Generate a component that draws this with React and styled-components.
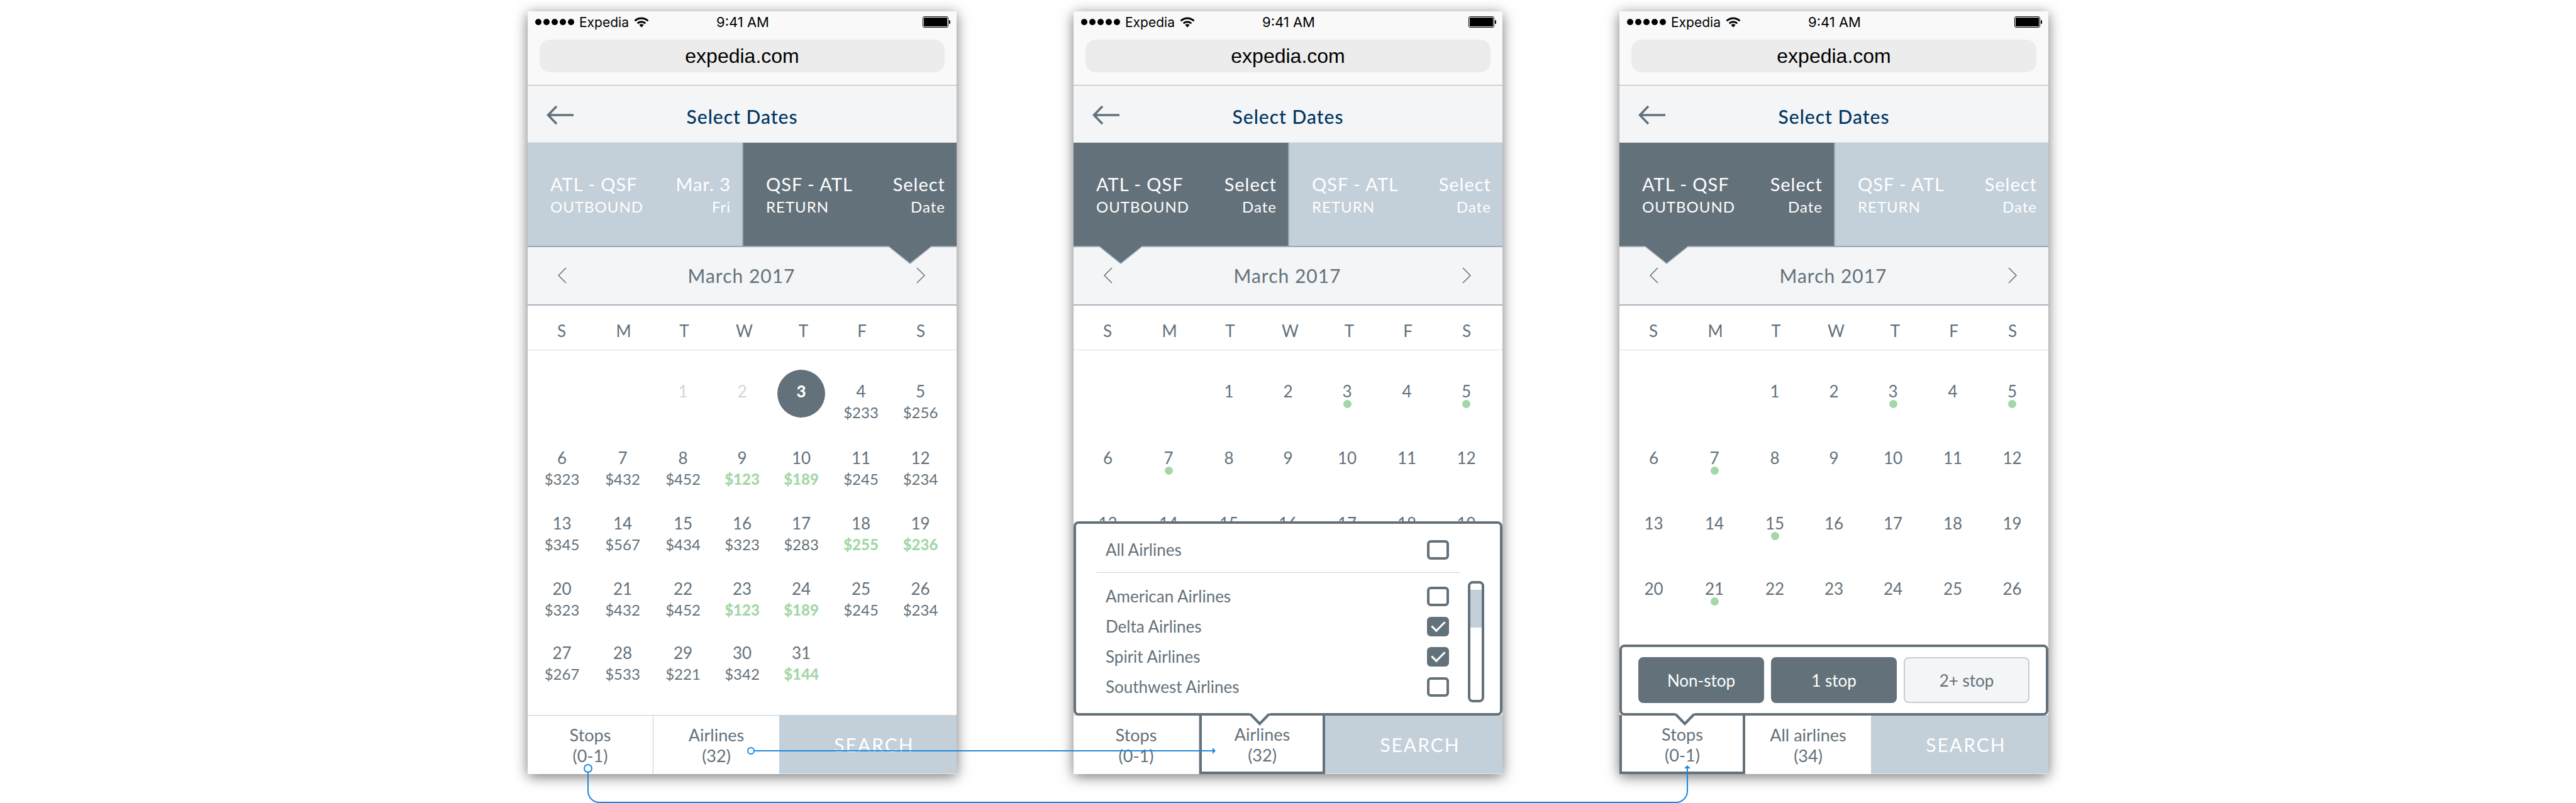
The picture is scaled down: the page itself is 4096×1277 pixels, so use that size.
import React from "react";
import styled, { createGlobalStyle, css } from "styled-components";

const c = {
  slate: "#63717a",
  mist: "#c3cfd9",
  edge: "#9ba9b4",
  panel: "#f3f5f7",
  line: "#dddddd",
  navy: "#00355f",
  green: "#a3d7a7",
  link: "#1b87de",
};

const GlobalStyle = createGlobalStyle`
  * { box-sizing: border-box; }
  body { margin: 0; background: #fff; color: ${c.slate}; font-family: Lato, "Open Sans", sans-serif; }
  button, input { font: inherit; color: inherit; }
  button { margin: 0; padding: 0; border: 0; background: none; cursor: pointer; }
`;

const Board = styled.main`
  position: relative;
  display: grid;
  grid-template-columns: repeat(3, minmax(0, 682px));
  justify-content: center;
  gap: 186px;
  min-height: 100vh;
  padding: 18px 0 46px;
  overflow: hidden;
`;

const Phone = styled.section`
  display: flex;
  flex-direction: column;
  background: #fff;
  box-shadow: 0 4px 20px rgba(0, 0, 0, 0.55);
`;

/* Browser chrome */
const Chrome = styled.div`
  padding-bottom: 20px;
  background: #f9f9f9;
  border-bottom: 1px solid #b0b0b0;
  color: #000;
  font-family: Inter, "Liberation Sans", sans-serif;
`;

const StatusBar = styled.div`
  display: grid;
  grid-template-columns: 1fr auto 1fr;
  align-items: center;
  height: 34px;
  margin-bottom: 11px;
  padding: 0 10px 0 12px;
  font-size: 21px;
`;

const Carrier = styled.div`
  display: flex;
  align-items: center;
  gap: 8px;
`;

const Clock = styled.span`
  font-size: 22px;
`;

const Signal = styled.span`
  display: flex;
  gap: 3px;
`;

const SignalDot = styled.i`
  width: 10px;
  height: 10px;
  border-radius: 50%;
  background: #000;
`;

const BatteryIcon = styled.svg`
  justify-self: end;
`;

const Address = styled.input`
  display: block;
  width: calc(100% - 38px);
  height: 52px;
  margin: 0 19px;
  padding: 0;
  border: 0;
  border-radius: 16px;
  background: #ececec;
  font-family: "Liberation Sans", sans-serif;
  font-size: 32px;
  text-align: center;
`;

/* Page header */
const Header = styled.header`
  display: grid;
  grid-template-columns: 43px 1fr 43px;
  align-items: center;
  height: 91px;
  padding: 4px 30px 0;
  background: ${c.panel};
  border-bottom: 1px solid #dfe6ea;
`;

const Title = styled.h1`
  margin: 0;
  padding-top: 3px;
  color: ${c.navy};
  font-size: 30px;
  font-weight: 500;
  letter-spacing: 1px;
  line-height: 36px;
  text-align: center;
`;

const IconButton = styled.button`
  display: grid;
  place-items: center;
`;

/* Flight legs */
const Legs = styled.div`
  position: relative;
  display: grid;
  grid-template-columns: 1fr 1fr;
  height: 166px;
  border-bottom: 2px solid ${c.edge};
`;

const Leg = styled.button`
  display: grid;
  grid-template-columns: auto auto;
  justify-content: space-between;
  align-content: center;
  padding: 3px 18px 0 36px;
  background: ${(p) => (p.$active ? c.slate : c.mist)};
  color: #fff;
  text-align: left;
  & + & { border-left: 2px solid ${c.edge}; }
`;

const LegMain = styled.span`
  font-size: 29px;
  letter-spacing: 1px;
  line-height: 36px;
  text-align: ${(p) => (p.$end ? "right" : "left")};
`;

const LegSub = styled.span`
  font-size: 24px;
  letter-spacing: 1px;
  line-height: 36px;
  text-align: ${(p) => (p.$end ? "right" : "left")};
`;

const LegPointer = styled.svg`
  position: absolute;
  top: 100%;
  ${(p) => (p.$side === "right" ? "right: 38px;" : "left: 39px;")}
`;

/* Calendar */
const MonthBar = styled.div`
  display: flex;
  align-items: center;
  justify-content: space-between;
  height: 93px;
  padding: 0 50px 2px 48px;
  background: ${c.panel};
  border-bottom: 2px solid #a9b4bd;
`;

const Month = styled.h2`
  margin: 0;
  font-size: 30px;
  font-weight: 400;
  letter-spacing: 1px;
  line-height: 36px;
`;

const Calendar = styled.table`
  display: block;
  flex: 1;
`;

const Weekdays = styled.thead`
  display: block;
  border-bottom: 1px solid ${c.line};
  & tr {
    display: grid;
    grid-template-columns: 100fr 97fr 96fr 95fr 93fr 93fr 94fr;
    padding: 0 10px 0 4px;
  }
`;

const Weekday = styled.th`
  padding: 10px 0 0;
  font-size: 26px;
  font-weight: 400;
  line-height: 60px;
`;

const Days = styled.tbody`
  display: grid;
  grid-template-rows: 106px 104px 104px 102px;
  padding-top: 31px;
`;

const Week = styled.tr`
  display: grid;
  grid-template-columns: 97fr 96fr 96fr 92fr 96fr 94fr 95fr;
  padding: 0 10px 0 6px;
`;

const DayCell = styled.td`
  display: grid;
  justify-content: center;
  align-content: start;
  padding: 0;
`;

const Day = styled.button`
  display: flex;
  flex-direction: column;
  align-items: center;
  width: 76px;
  height: 76px;
  padding-top: 17px;
  border-radius: 50%;
  font-size: 26px;
  line-height: 34px;
  ${(p) => p.$past && css`color: #d0d6da;`}
  ${(p) => p.$chosen && css`background: ${c.slate}; color: #fff; font-weight: 900;`}
`;

const Price = styled.span`
  font-size: 24px;
  ${(p) => p.$deal && css`color: ${c.green}; font-weight: 900;`}
`;

const Dot = styled.i`
  width: 13px;
  height: 13px;
  margin-top: -3px;
  border-radius: 50%;
  background: ${c.green};
`;

/* Bottom bar */
const Footer = styled.footer`
  position: relative;
  display: grid;
  grid-template-columns: 200fr 200fr 282fr;
  height: 94px;
`;

const Filter = styled.button`
  padding: 1px 0 0;
  border: solid ${c.mist};
  border-width: 1px 1px 0 0;
  background: #fff;
  font-size: 27px;
  line-height: 33px;
  & + & { border-right: 0; }
  ${(p) => p.$open && css`
    && {
      border: solid ${c.slate};
      border-width: 0 4px 4px;
      padding-top: 4px;
    }
  `}
`;

const FilterLine = styled.span`
  display: block;
`;

const Search = styled.button`
  padding-left: 20px;
  border-bottom: 1px solid #e3e9ee;
  background: ${c.mist};
  color: #fff;
  font-size: 30px;
  letter-spacing: 2px;
`;

/* Popovers */
const Popover = styled.div`
  position: absolute;
  right: 0;
  bottom: 93px;
  left: 0;
  border: 4px solid ${c.slate};
  border-radius: 8px;
  background: #fff;
`;

const PopoverPointer = styled.svg`
  position: absolute;
  top: 100%;
  left: ${(p) => p.$left};
`;

const AirlinePanel = styled(Popover)`
  display: grid;
  grid-template-columns: 1fr 26px;
  gap: 0 12px;
  padding: 17px 25px 17px 33px;
`;

const AirlineRow = styled.label`
  display: flex;
  align-items: center;
  justify-content: space-between;
  height: 48px;
  padding: 0 18px 0 14px;
  font-size: 26px;
`;

const AllAirlines = styled.div`
  grid-column: 1;
  padding-bottom: 12px;
  border-bottom: 1px solid #d4d4d4;
`;

const AirlineList = styled.div`
  grid-column: 1;
  padding-top: 13px;
`;

const Check = styled.input.attrs({ type: "checkbox" })`
  appearance: none;
  display: grid;
  place-items: center;
  width: 35px;
  height: 31px;
  margin: 0;
  border: 4px solid ${c.slate};
  border-radius: 6px;
  background: #fff;
  &:checked { background: ${c.slate}; }
  &:checked::after {
    content: "";
    width: 9px;
    height: 18px;
    margin-top: -5px;
    border: solid #fff;
    border-width: 0 3px 3px 0;
    transform: rotate(45deg);
  }
`;

const ScrollTrack = styled.div`
  grid-column: 2;
  height: 193px;
  margin-top: 13px;
  padding-top: 10px;
  border: 4px solid ${c.slate};
  border-radius: 8px;
`;

const ScrollThumb = styled.div`
  height: 60px;
  background: ${c.mist};
`;

const StopsPanel = styled(Popover)`
  display: grid;
  grid-template-columns: repeat(3, 1fr);
  gap: 11px;
  padding: 16px 26px;
`;

const StopOption = styled.button`
  height: 73px;
  border: 2px solid ${(p) => (p.$on ? c.slate : c.mist)};
  border-radius: 8px;
  background: ${(p) => (p.$on ? c.slate : c.panel)};
  color: ${(p) => (p.$on ? "#fff" : c.slate)};
  font-size: 26px;
`;

/* Flow arrows between the screens */
const Flow = styled.svg`
  position: absolute;
  top: 0;
  left: calc(50% - 1209px);
  pointer-events: none;
`;

const Wifi = () => (
  <svg width="24" height="17" viewBox="0 0 24 17" fill="none" stroke="#000" strokeWidth="3">
    <path d="M1.5 6.2a15 15 0 0 1 21 0" />
    <path d="M5.7 10.2a9 9 0 0 1 12.6 0" />
    <path d="M12 16.5l-3.6-3.7a5.2 5.2 0 0 1 7.2 0z" fill="#000" stroke="none" />
  </svg>
);

const Battery = () => (
  <BatteryIcon width="44" height="18" viewBox="0 0 44 18">
    <rect x="0.5" y="0.5" width="40" height="17" rx="2.5" fill="none" stroke="#000" />
    <rect x="2" y="2" width="37" height="14" rx="1" />
    <path d="M42 6h.5a1.5 1.5 0 0 1 1.5 1.5v3a1.5 1.5 0 0 1-1.5 1.5H42z" />
  </BatteryIcon>
);

const BackArrow = () => (
  <svg width="43" height="30" viewBox="0 0 43 30" fill="none" stroke={c.slate} strokeWidth="3.5">
    <path d="M2.5 15H43M16 1L2.5 15 16 29" />
  </svg>
);

const Chevron = ({ next }) => (
  <svg width="14" height="26" viewBox="0 0 14 26" fill="none" stroke={c.slate} strokeWidth="1.5">
    <path d={next ? "M1 1l12 12L1 25" : "M13 1L1 13l12 12"} />
  </svg>
);

const Pointer = ({ left }) => (
  <PopoverPointer $left={left} width="34" height="22" viewBox="0 0 34 22">
    <path d="M0 0h34L17 20z" fill="#fff" transform="translate(0 -1)" />
    <path d="M2 1.5L17 17 32 1.5" fill="none" stroke={c.slate} strokeWidth="4" />
  </PopoverPointer>
);

const prices = {
  4: 233, 5: 256, 6: 323, 7: 432, 8: 452, 9: 123, 10: 189, 11: 245, 12: 234,
  13: 345, 14: 567, 15: 434, 16: 323, 17: 283, 18: 255, 19: 236,
  20: 323, 21: 432, 22: 452, 23: 123, 24: 189, 25: 245, 26: 234,
  27: 267, 28: 533, 29: 221, 30: 342, 31: 144,
};
const deals = [9, 10, 18, 19, 23, 24, 31];
const weekdayNames = ["S", "M", "T", "W", "T", "F", "S"];

function MonthGrid({ weeks, priced, chosen, dots = [] }) {
  return (
    <Calendar>
      <Weekdays>
        <tr>{weekdayNames.map((d, i) => <Weekday key={i} scope="col">{d}</Weekday>)}</tr>
      </Weekdays>
      <Days>
        {Array.from({ length: weeks }, (_, w) => (
          <Week key={w}>
            {weekdayNames.map((_, i) => {
              const day = w * 7 + i - 1;
              if (day < 1 || day > 31) return <DayCell key={i} />;
              return (
                <DayCell key={i}>
                  <Day type="button" $past={day < chosen} $chosen={day === chosen}>
                    {day}
                    {priced && prices[day] && <Price $deal={deals.includes(day)}>${prices[day]}</Price>}
                    {dots.includes(day) && <Dot />}
                  </Day>
                </DayCell>
              );
            })}
          </Week>
        ))}
      </Days>
    </Calendar>
  );
}

function Screen({ active, outboundDate, outboundDay, children, filters, popover }) {
  const returning = active === "return";
  return (
    <Phone>
      <Chrome>
        <StatusBar>
          <Carrier>
            <Signal>{[0, 1, 2, 3, 4].map((i) => <SignalDot key={i} />)}</Signal>
            Expedia
            <Wifi />
          </Carrier>
          <Clock>9:41 AM</Clock>
          <Battery />
        </StatusBar>
        <Address aria-label="Address" defaultValue="expedia.com" />
      </Chrome>
      <Header>
        <IconButton type="button" aria-label="Back"><BackArrow /></IconButton>
        <Title>Select Dates</Title>
      </Header>
      <Legs>
        <Leg type="button" $active={!returning}>
          <LegMain>ATL - QSF</LegMain>
          <LegMain $end>{outboundDate}</LegMain>
          <LegSub>OUTBOUND</LegSub>
          <LegSub $end>{outboundDay}</LegSub>
        </Leg>
        <Leg type="button" $active={returning}>
          <LegMain>QSF - ATL</LegMain>
          <LegMain $end>Select</LegMain>
          <LegSub>RETURN</LegSub>
          <LegSub $end>Date</LegSub>
        </Leg>
        <LegPointer $side={returning ? "right" : "left"} width="72" height="29" viewBox="0 0 72 29">
          <path d="M0 0h72L36 29z" fill={c.edge} />
          <path d="M2 0h68L36 27z" fill={c.slate} />
        </LegPointer>
      </Legs>
      <MonthBar>
        <IconButton type="button" aria-label="Previous month"><Chevron /></IconButton>
        <Month>March 2017</Month>
        <IconButton type="button" aria-label="Next month"><Chevron next /></IconButton>
      </MonthBar>
      {children}
      <Footer>
        {filters.map((f) => (
          <Filter key={f.name} type="button" $open={f.open}>
            <FilterLine>{f.name}</FilterLine>
            <FilterLine>{f.value}</FilterLine>
          </Filter>
        ))}
        <Search type="button">SEARCH</Search>
        {popover}
      </Footer>
    </Phone>
  );
}

const airlines = [
  ["American Airlines", false],
  ["Delta Airlines", true],
  ["Spirit Airlines", true],
  ["Southwest Airlines", false],
];

export default function App() {
  return (
    <>
      <GlobalStyle />
      <Board>
        <Screen
          active="return"
          outboundDate="Mar. 3"
          outboundDay="Fri"
          filters={[{ name: "Stops", value: "(0-1)" }, { name: "Airlines", value: "(32)" }]}
        >
          <MonthGrid weeks={5} priced chosen={3} />
        </Screen>

        <Screen
          active="outbound"
          outboundDate="Select"
          outboundDay="Date"
          filters={[{ name: "Stops", value: "(0-1)" }, { name: "Airlines", value: "(32)", open: true }]}
          popover={
            <AirlinePanel>
              <AllAirlines>
                <AirlineRow>All Airlines<Check /></AirlineRow>
              </AllAirlines>
              <AirlineList>
                {airlines.map(([name, on]) => (
                  <AirlineRow key={name}>{name}<Check defaultChecked={on} /></AirlineRow>
                ))}
              </AirlineList>
              <ScrollTrack><ScrollThumb /></ScrollTrack>
              <Pointer left="275px" />
            </AirlinePanel>
          }
        >
          <MonthGrid weeks={3} dots={[3, 5, 7]} />
        </Screen>

        <Screen
          active="outbound"
          outboundDate="Select"
          outboundDay="Date"
          filters={[{ name: "Stops", value: "(0-1)", open: true }, { name: "All airlines", value: "(34)" }]}
          popover={
            <StopsPanel>
              <StopOption type="button" $on>Non-stop</StopOption>
              <StopOption type="button" $on>1 stop</StopOption>
              <StopOption type="button">2+ stop</StopOption>
              <Pointer left="83px" />
            </StopsPanel>
          }
        >
          <MonthGrid weeks={4} dots={[3, 5, 7, 15, 21]} />
        </Screen>

        <Flow width="2418" height="1277" viewBox="0 0 2418 1277" fill="none" stroke={c.link} strokeWidth="2">
          <path d="M360 1194H1092" />
          <path d="M1089 1189l5 5-5 5z" fill={c.link} stroke="none" />
          <circle cx="355" cy="1194" r="5" fill="#fff" />
          <path d="M96 1228V1258a18 18 0 0 0 18 18H1826a18 18 0 0 0 18-18V1220" />
          <path d="M1839 1222l5-5 5 5z" fill={c.link} stroke="none" />
          <circle cx="96" cy="1222" r="6" fill="#fff" />
        </Flow>
      </Board>
    </>
  );
}
